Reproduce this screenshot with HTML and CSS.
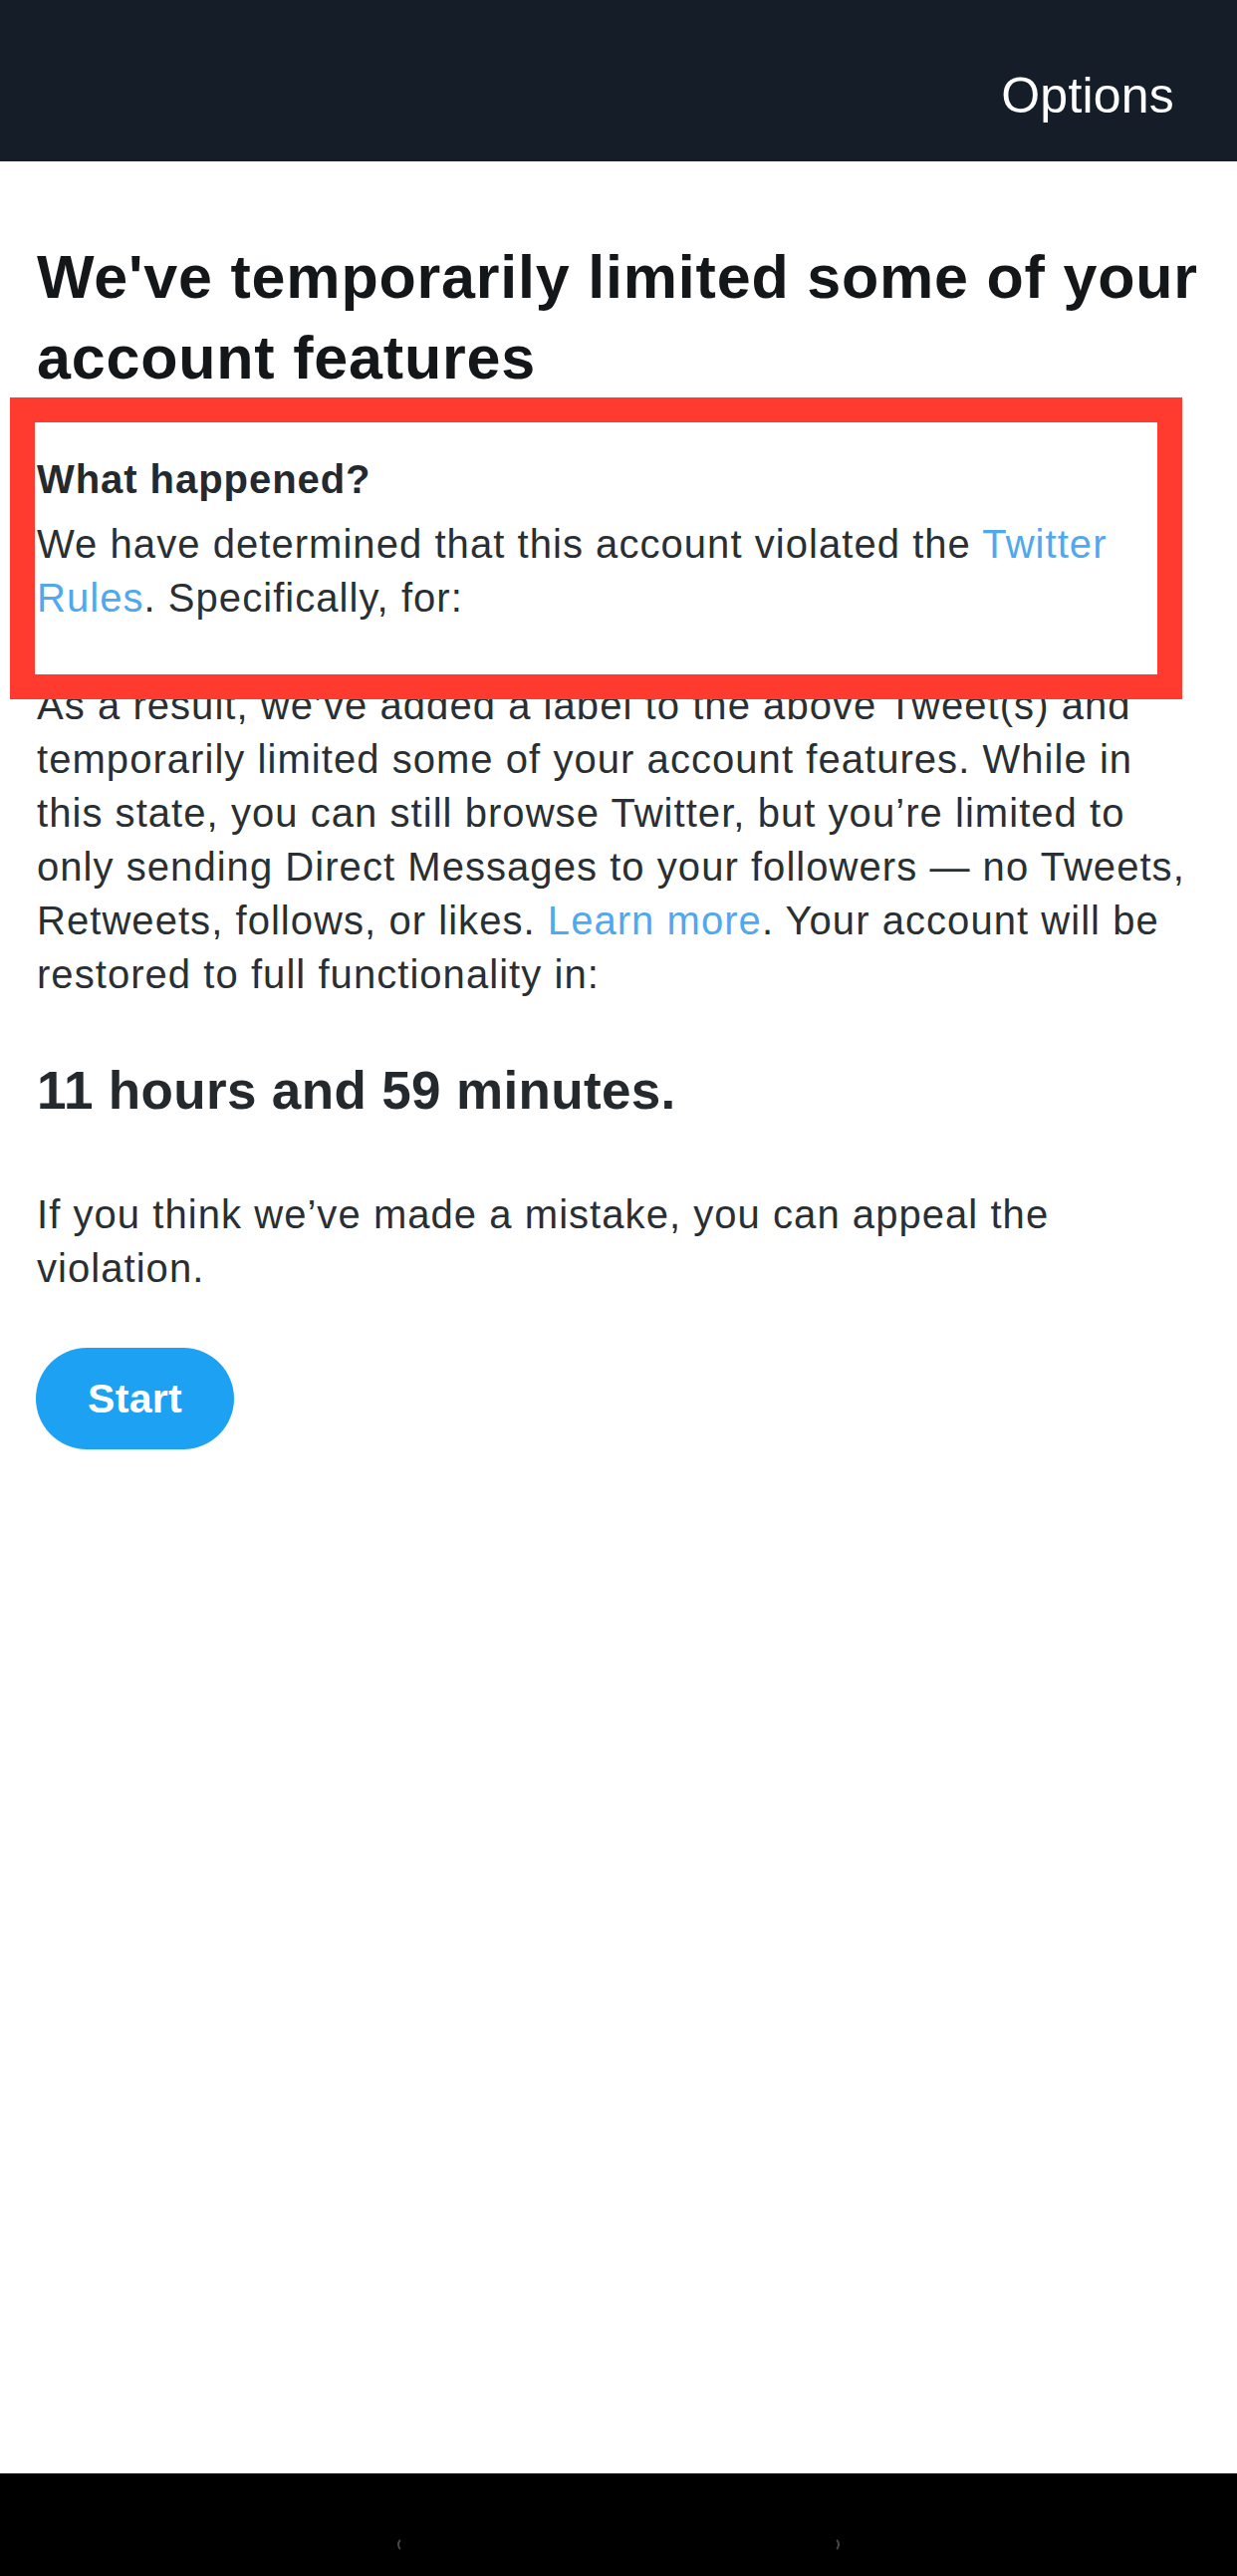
FILE: index.html
```html
<!DOCTYPE html>
<html lang="en">
<head>
<meta charset="utf-8">
<title>Account features limited</title>
<link rel="stylesheet" href="styles.css">
</head>
<body>
  <header class="topbar">
    <span class="options">Options</span>
  </header>
  <main class="content">
    <h1 class="title">We've temporarily limited some of your account features</h1>
    <h2 class="subhead">What happened?</h2>
    <p class="body-text">We have determined that this account violated the <a class="link" href="#">Twitter Rules</a>. Specifically, for:</p>
    <ul class="violations"></ul>
    <p class="body-text">As a result, we’ve added a label to the above Tweet(s) and temporarily limited some of your account features. While in this state, you can still browse Twitter, but you’re limited to only sending Direct Messages to your followers — no Tweets, Retweets, follows, or likes. <a class="link" href="#">Learn more</a>. Your account will be restored to full functionality in:</p>
    <h2 class="countdown">11 hours and 59 minutes.</h2>
    <p class="body-text appeal">If you think we’ve made a mistake, you can appeal the violation.</p>
    <button class="start" type="button">Start</button>
    <div class="highlight"></div>
  </main>
  <footer class="navbar">
    <span class="home-indicator"></span>
  </footer>
</body>
</html>
```
FILE: styles.css
```css
html, body {
  margin: 0;
  padding: 0;
}

body {
  display: flex;
  flex-direction: column;
  min-height: 100vh;
  background: #ffffff;
  font-family: "Liberation Sans", Arial, Helvetica, sans-serif;
  color: #292f33;
}

.topbar {
  height: 162px;
  box-sizing: border-box;
  background: #141d28;
  display: flex;
  justify-content: flex-end;
  align-items: flex-start;
  padding: 66px 63px 0 0;
}

.options {
  color: #ffffff;
  font-size: 50px;
  line-height: 60px;
  font-weight: 400;
  letter-spacing: 0.2px;
}

.content {
  position: relative;
  flex: 1;
  padding: 76px 34px 0 37px;
}

.title {
  margin: 0;
  font-size: 61px;
  line-height: 81px;
  font-weight: 700;
  letter-spacing: 0.8px;
  color: #14171a;
}

.subhead {
  margin: 54px 0 11px;
  font-size: 40px;
  line-height: 54px;
  font-weight: 700;
  letter-spacing: 0.95px;
  color: #24292e;
}

.body-text {
  margin: 0;
  font-size: 40px;
  line-height: 54px;
  letter-spacing: 1.05px;
  color: #292f33;
}

.link {
  color: #50a8ee;
  text-decoration: none;
}

.violations {
  margin: 0;
  padding: 0;
  height: 54px;
  list-style: none;
}

.countdown {
  margin: 58px 0 0;
  font-size: 53px;
  line-height: 64px;
  font-weight: 700;
  letter-spacing: 0.35px;
  color: #24292e;
}

.appeal {
  margin-top: 65px;
}

.start {
  display: block;
  margin: 53px 0 0 -1px;
  width: 199px;
  height: 102px;
  padding: 0;
  border: none;
  border-radius: 51px;
  background: #1da1f2;
  color: #ffffff;
  font-family: "Liberation Sans", Arial, Helvetica, sans-serif;
  font-size: 41px;
  font-weight: 700;
  letter-spacing: 0.3px;
}

.highlight {
  position: absolute;
  left: 10px;
  top: 237px;
  width: 1177px;
  height: 303px;
  box-sizing: border-box;
  border: 25px solid #ff3b30;
}

.navbar {
  height: 103px;
  box-sizing: border-box;
  background: #000000;
  padding-top: 64px;
  display: flex;
  justify-content: center;
  align-items: flex-start;
}

.home-indicator {
  width: 444px;
  height: 15px;
  box-sizing: border-box;
  border: 2px solid transparent;
  border-left-color: #4a4a4a;
  border-right-color: #4a4a4a;
  border-radius: 8px;
}
```
